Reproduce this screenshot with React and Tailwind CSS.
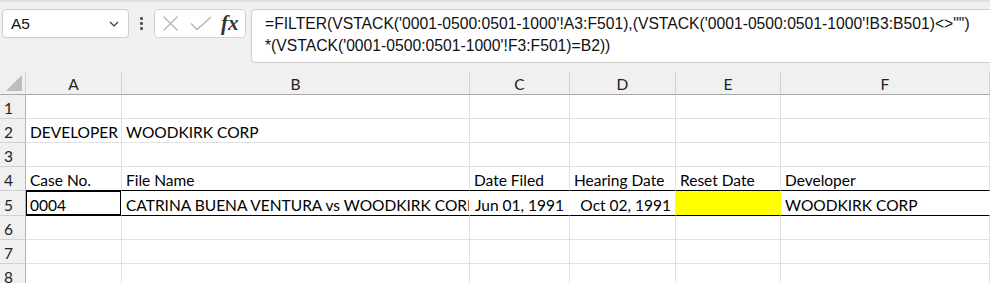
import React from "react";

const F = "font-['Liberation_Sans',Arial,sans-serif]";
const CF = "font-['Lato','Liberation_Sans',sans-serif]";

function HeaderCell({ w, children }) {
  return (
    <div
      className={`${w} ${CF} h-full flex items-end justify-center pb-[2px] border-r border-[#d2d2d2] border-b border-b-[#a8a8a8] text-[15.5px] leading-[16px] text-[#222]`}
    >
      {children}
    </div>
  );
}

function RowNum({ n }) {
  return (
    <div className={`${CF} w-[26px] shrink-0 h-full flex items-end pl-[4px] pb-[2px] bg-[#f0f0f0] border-r border-[#b4b4b4] border-b border-b-[#d2d2d2] text-[15.5px] leading-[16px] text-[#222]`}>
      {n}
    </div>
  );
}

function Cell({ w, children, bb = "border-b-[#e1e1e1]", br = "border-r-[#e1e1e1]", extra = "", align = "justify-start pl-[4px]" }) {
  return (
    <div
      className={`${w} ${CF} h-full relative flex items-end ${align} pb-[2px] overflow-hidden whitespace-nowrap border-r border-b ${bb} ${br} ${extra} text-[15.5px] leading-[16px] text-black`}
    >
      {children}
    </div>
  );
}

const W = {
  a: "w-[96px] shrink-0",
  b: "w-[348px] shrink-0",
  c: "w-[100px] shrink-0",
  d: "w-[106px] shrink-0",
  e: "w-[105px] shrink-0",
  f: "flex-1 min-w-0",
};

function PlainRow({ n, a, b, h = "h-[24px]" }) {
  return (
    <div className={`flex ${h}`}>
      <RowNum n={n} />
      <Cell w={W.a}>{a}</Cell>
      <Cell w={W.b}>{b}</Cell>
      <Cell w={W.c} />
      <Cell w={W.d} />
      <Cell w={W.e} />
      <Cell w={W.f} />
    </div>
  );
}

export default function App() {
  return (
    <div className={`${F} w-[990px] h-[283px] overflow-hidden bg-white`}>
      {/* formula bar area */}
      <div className="h-[71px] bg-[#f0f0f0] relative">
        <div className="h-[3px] bg-gradient-to-b from-[#dcdcdc] to-[#f0f0f0]" />
        <div className="flex items-start pt-[6px] pl-[2px]">
          {/* name box */}
          <div className="w-[127px] h-[29px] bg-white border border-[#cdcdcd] rounded-[4px] flex items-center justify-between pl-[8px] pr-[9px]">
            <span className="text-[15.5px] text-[#111]">A5</span>
            <svg width="10" height="6" viewBox="0 0 10 6" className="mt-[1px]">
              <path d="M1 1 L5 5 L9 1" fill="none" stroke="#333" strokeWidth="1.2" />
            </svg>
          </div>
          {/* dots */}
          <div className="w-[25px] h-[29px] flex flex-col items-center justify-center gap-[2px]">
            <div className="w-[3px] h-[3px] bg-[#555] rounded-[1px]" />
            <div className="w-[3px] h-[3px] bg-[#555] rounded-[1px]" />
            <div className="w-[3px] h-[3px] bg-[#555] rounded-[1px]" />
          </div>
          {/* buttons */}
          <div className="w-[92px] h-[29px] bg-white border border-[#d4d4d4] rounded-[4px] flex items-center pl-[7px]">
            <svg width="17" height="17" viewBox="0 0 17 17">
              <path d="M1.5 1.5 L15.5 15.5 M15.5 1.5 L1.5 15.5" stroke="#b3b3b3" strokeWidth="1.3" fill="none" />
            </svg>
            <svg width="22" height="15" viewBox="0 0 22 15" className="ml-[11px]">
              <path d="M1 7.5 L7 13.5 L21 1" stroke="#b3b3b3" strokeWidth="1.3" fill="none" />
            </svg>
            <span className="ml-[9px] font-['Liberation_Serif',serif] italic font-bold text-[21px] leading-[20px] text-[#333] -mt-[2px]">
              fx
            </span>
          </div>
          {/* formula input */}
          <div className="ml-[5px] flex-1 h-[54px] bg-white border border-r-0 border-[#cdcdcd] rounded-l-[5px] pl-[13px] pt-[3px] text-[15.7px] leading-[22px] text-[#111] whitespace-nowrap overflow-hidden">
            <div>=FILTER(VSTACK('0001-0500:0501-1000'!A3:F501),(VSTACK('0001-0500:0501-1000'!B3:B501)&lt;&gt;"")</div>
            <div>*(VSTACK('0001-0500:0501-1000'!F3:F501)=B2))</div>
          </div>
        </div>
      </div>

      {/* grid */}
      <div className="bg-white">
        {/* column headers */}
        <div className="flex h-[24px] bg-[#f0f0f0]">
          <div className="w-[26px] shrink-0 h-full relative border-r border-[#d2d2d2] border-b border-b-[#a8a8a8]">
            <svg width="16" height="16" viewBox="0 0 16 16" className="absolute right-[3px] bottom-[3px]">
              <path d="M16 0 L16 16 L0 16 Z" fill="#bdbdbd" />
            </svg>
          </div>
          <HeaderCell w={W.a}>A</HeaderCell>
          <HeaderCell w={W.b}>B</HeaderCell>
          <HeaderCell w={W.c}>C</HeaderCell>
          <HeaderCell w={W.d}>D</HeaderCell>
          <HeaderCell w={W.e}>E</HeaderCell>
          <HeaderCell w={W.f}>F</HeaderCell>
        </div>

        <PlainRow n={1} />
        <PlainRow n={2} a="DEVELOPER" b="WOODKIRK CORP" />
        <PlainRow n={3} />

        {/* row 4 */}
        <div className="flex h-[24px]">
          <RowNum n={4} />
          <Cell w={W.a} bb="border-b-black">Case No.</Cell>
          <Cell w={W.b} bb="border-b-black">File Name</Cell>
          <Cell w={W.c} bb="border-b-black">Date Filed</Cell>
          <Cell w={W.d} bb="border-b-black">Hearing Date</Cell>
          <Cell w={W.e} bb="border-b-black">Reset Date</Cell>
          <Cell w={W.f} bb="border-b-black">Developer</Cell>
        </div>

        {/* row 5 */}
        <div className="flex h-[25px]">
          <RowNum n={5} />
          <Cell w={W.a} bb="border-b-black" br="border-r-white">
            0004
            <div className="absolute -left-[1px] -top-[1px] right-[-1px] bottom-[-1px] border-2 border-black pointer-events-none" />
          </Cell>
          <Cell w={W.b} bb="border-b-black" br="border-r-white">CATRINA BUENA VENTURA vs WOODKIRK CORP</Cell>
          <Cell w={W.c} bb="border-b-black" br="border-r-white" align="justify-end pr-[5px]">Jun 01, 1991</Cell>
          <Cell w={W.d} bb="border-b-black" br="border-r-[#ffff00]" align="justify-end pr-[4px]">Oct 02, 1991</Cell>
          <Cell w={W.e} bb="border-b-black" br="border-r-[#ffff00]" extra="bg-[#ffff00]" />
          <Cell w={W.f} bb="border-b-black" br="border-r-white">WOODKIRK CORP</Cell>
        </div>

        <PlainRow n={6} />
        <PlainRow n={7} />
        <PlainRow n={8} />
      </div>
    </div>
  );
}
